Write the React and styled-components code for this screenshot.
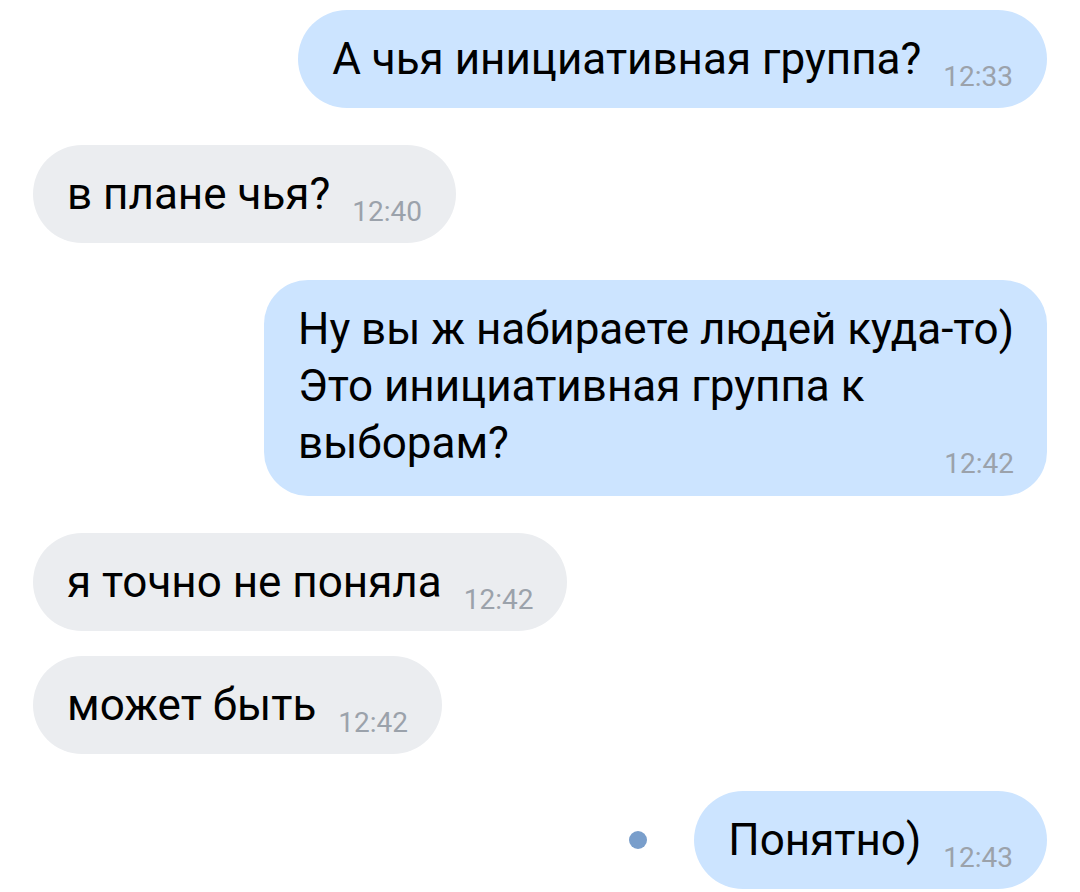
import React from 'react';
import styled, { createGlobalStyle } from 'styled-components';

const messages = [
  { id: 1, out: true, lines: ['А чья инициативная группа?'], time: '12:33' },
  { id: 2, out: false, lines: ['в плане чья?'], time: '12:40' },
  {
    id: 3,
    out: true,
    lines: ['Ну вы ж набираете людей куда-то)', 'Это инициативная группа к', 'выборам?'],
    time: '12:42',
  },
  { id: 4, out: false, lines: ['я точно не поняла'], time: '12:42' },
  { id: 5, out: false, lines: ['может быть'], time: '12:42', grouped: true },
  { id: 6, out: true, lines: ['Понятно)'], time: '12:43', unread: true },
];

const Message = ({ m }) => {
  const head = m.lines.slice(0, -1);
  const last = m.lines[m.lines.length - 1];
  const multi = head.length > 0;
  return (
    <Row $out={m.out} $grouped={m.grouped}>
      {m.unread && <UnreadDot />}
      <Bubble $out={m.out} $multi={multi}>
        {head.map((line) => (
          <Line key={line}>{line}</Line>
        ))}
        <LastLine $multi={multi}>
          <Line>{last}</Line>
          <Time $multi={multi}>{m.time}</Time>
        </LastLine>
      </Bubble>
    </Row>
  );
};

const App = () => {
  return (
    <Page>
      <GlobalStyle />
      <Feed>
        {messages.map((m) => (
          <Message key={m.id} m={m} />
        ))}
      </Feed>
    </Page>
  );
};

export default App;

const GlobalStyle = createGlobalStyle`
  body {
    margin: 0;
    background: #ffffff;
    font-family: Roboto, "Noto Sans", sans-serif;
  }
`;

const Page = styled.div`
  width: 1080px;
  height: 892px;
  overflow: hidden;
  background: #ffffff;
`;

const Feed = styled.div`
  display: flex;
  flex-direction: column;
  padding: 10px 33px 0;
`;

const Row = styled.div`
  display: flex;
  align-items: center;
  justify-content: ${({ $out }) => ($out ? 'flex-end' : 'flex-start')};
  margin-top: ${({ $grouped }) => ($grouped ? '25px' : '37px')};
  &:first-child {
    margin-top: 0;
  }
`;

const Bubble = styled.div`
  display: flex;
  flex-direction: column;
  box-sizing: border-box;
  min-height: 98px;
  padding: ${({ $multi }) => ($multi ? '21px 33px 24px 34px' : '24px 34px 0 34px')};
  border-radius: ${({ $multi }) => ($multi ? '44px' : '49px')};
  background: ${({ $out }) => ($out ? '#cce4ff' : '#ebedf0')};
`;

const Line = styled.div`
  font-size: 44px;
  line-height: 57px;
  color: #000000;
  white-space: nowrap;
`;

const LastLine = styled.div`
  display: flex;
  align-items: baseline;
  justify-content: space-between;
  ${Line} {
    line-height: ${({ $multi }) => ($multi ? '57px' : '50px')};
  }
`;

const Time = styled.div`
  font-size: 28px;
  color: #9ba2ab;
  margin-left: 22px;
  position: relative;
  top: ${({ $multi }) => ($multi ? '15px' : '12px')};
`;

const UnreadDot = styled.span`
  width: 18px;
  height: 18px;
  border-radius: 50%;
  background: #799ecb;
  margin-right: 47px;
`;
